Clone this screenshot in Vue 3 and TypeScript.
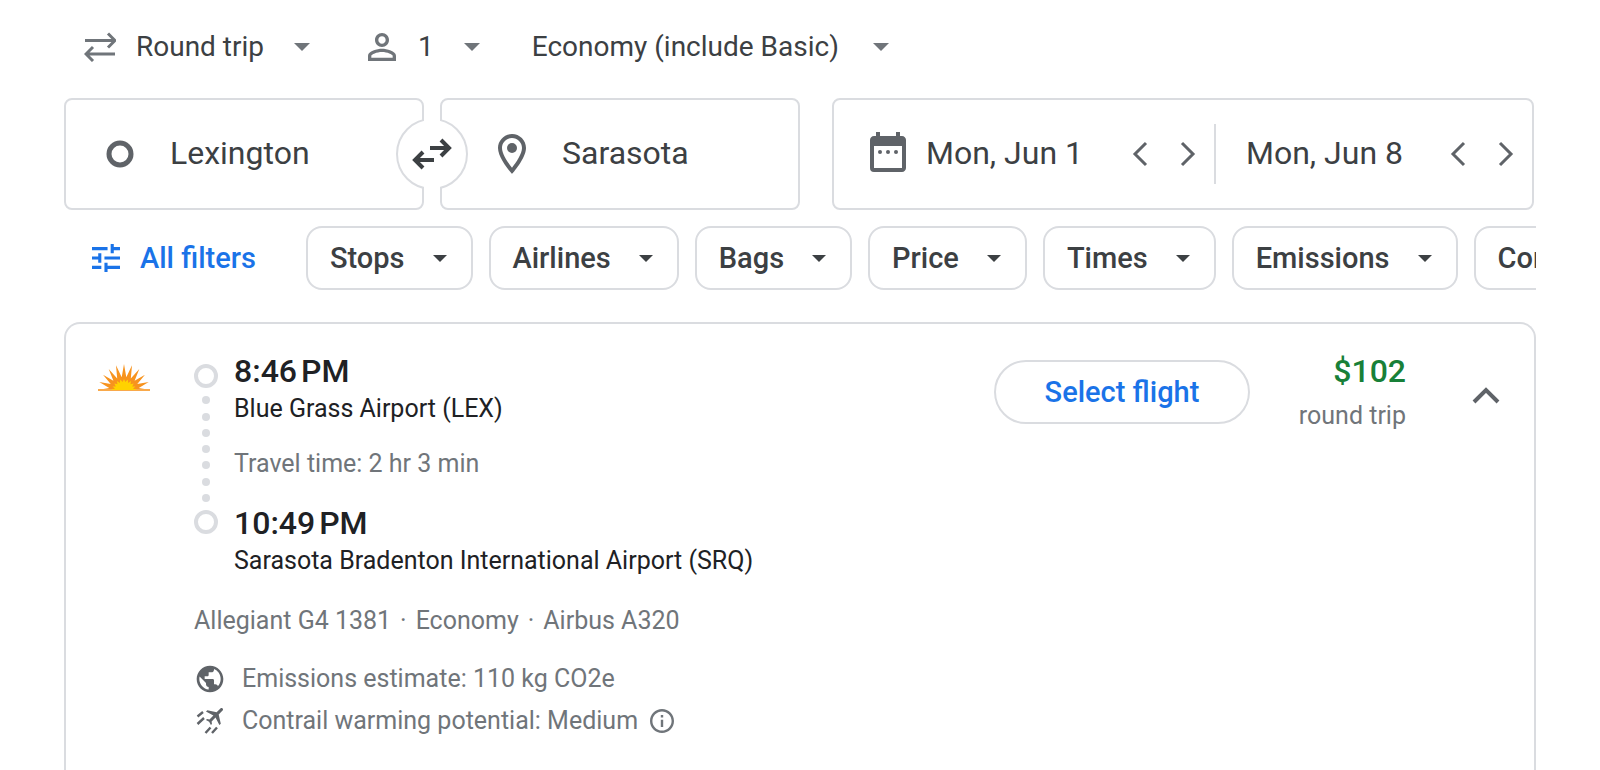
<script setup lang="ts">
import { ref } from 'vue'

const tripType = ref('Round trip')
const cabin = ref('Economy (include Basic)')
const origin = ref('Lexington')
const destination = ref('Sarasota')

const dates = ref([
  { id: 'departure', label: 'Departure', value: 'Mon, Jun 1' },
  { id: 'return', label: 'Return', value: 'Mon, Jun 8' },
])

const filters = ['Stops', 'Airlines', 'Bags', 'Price', 'Times', 'Emissions', 'Connecting airports']

function swapPlaces(): void {
  const previous = origin.value
  origin.value = destination.value
  destination.value = previous
}

// Rays of the half-sun logo, alternating between tip and valley over 180 degrees.
function sunRays(count: number, outerX: number, outerY: number, inner: number): string {
  const points: string[] = []
  for (let i = 0; i <= count * 2; i++) {
    const angle = Math.PI - (Math.PI * i) / (count * 2)
    const tip = i % 2 === 0
    const x = 26 + Math.cos(angle) * (tip ? outerX : inner * 1.15)
    const y = 26 - Math.sin(angle) * (tip ? outerY : inner)
    points.push(`${x.toFixed(1)},${y.toFixed(1)}`)
  }
  return points.join(' ')
}

const outerSun = sunRays(10, 26, 26, 13)
const innerSun = sunRays(10, 12, 11, 8)
</script>

<template>
  <main class="page">
    <div class="options">
      <label class="option trip">
        <svg class="swap-thin" viewBox="0 0 32 30" aria-hidden="true">
          <path d="M1 8.500H30M24 1.500l7 7-7 7M31 22H2M9 15l-7 7 7 7" />
        </svg>
        <select v-model="tripType" aria-label="Trip type">
          <option>Round trip</option>
          <option>One way</option>
          <option>Multi-city</option>
        </select>
        <svg class="caret" viewBox="0 0 16 8" aria-hidden="true"><path d="M0 0h16L8 8z" /></svg>
      </label>
      <button class="option people" type="button" aria-label="1 passenger">
        <svg class="person" viewBox="4 4 16 16" aria-hidden="true">
          <path d="M12 5.900c1.160 0 2.100.940 2.100 2.100s-.940 2.100-2.100 2.100S9.900 9.160 9.900 8s.940-2.100 2.100-2.100m0 9c2.970 0 6.100 1.460 6.100 2.100v1.100H5.900V17c0-.640 3.130-2.100 6.100-2.100M12 4C9.790 4 8 5.790 8 8s1.790 4 4 4 4-1.790 4-4-1.790-4-4-4zm0 9c-2.670 0-8 1.340-8 4v3h16v-3c0-2.660-5.330-4-8-4z" />
        </svg>
        <span>1</span>
        <svg class="caret" viewBox="0 0 16 8" aria-hidden="true"><path d="M0 0h16L8 8z" /></svg>
      </button>
      <label class="option cabin">
        <select v-model="cabin" aria-label="Cabin class">
          <option>Economy (include Basic)</option>
          <option>Business</option>
        </select>
        <svg class="caret" viewBox="0 0 16 8" aria-hidden="true"><path d="M0 0h16L8 8z" /></svg>
      </label>
    </div>

    <div class="search">
      <div class="places">
        <label class="field">
          <svg class="field-icon" viewBox="0 0 48 48" aria-hidden="true">
            <circle cx="24" cy="24" r="11" fill="none" stroke="currentColor" stroke-width="5" />
          </svg>
          <input v-model="origin" type="text" aria-label="Where from?" />
        </label>
        <label class="field">
          <svg class="field-icon" viewBox="0 0 24 24" aria-hidden="true">
            <path d="M12 2C8.140 2 5 5.140 5 9c0 5.250 7 13 7 13s7-7.750 7-13c0-3.860-3.140-7-7-7zM7 9c0-2.760 2.240-5 5-5s5 2.240 5 5c0 2.880-2.880 7.190-5 9.880C9.920 16.210 7 11.850 7 9z" />
            <circle cx="12" cy="9" r="2.500" />
          </svg>
          <input v-model="destination" type="text" aria-label="Where to?" />
        </label>
        <button class="swap" type="button" aria-label="Swap origin and destination" @click="swapPlaces">
          <svg viewBox="0 0 40 32" aria-hidden="true">
            <path d="M18 10h19M29 2l8 8-8 8M22 22H3M11 14l-8 8 8 8" />
          </svg>
        </button>
      </div>
      <div class="dates">
        <div v-for="(date, i) in dates" :key="date.id" class="date">
          <svg v-if="i === 0" class="calendar" viewBox="0 0 24 24" aria-hidden="true">
            <path d="M19 4h-1V2h-2v2H8V2H6v2H5c-1.110 0-2 .900-2 2v14a2 2 0 0 0 2 2h14c1.100 0 2-.900 2-2V6c0-1.100-.900-2-2-2zm0 16H5V9h14v11z" />
            <circle cx="8" cy="12" r="1" /><circle cx="12" cy="12" r="1" /><circle cx="16" cy="12" r="1" />
          </svg>
          <input v-model="date.value" type="text" :aria-label="date.label" />
          <button class="step" type="button" :aria-label="`${date.label}: previous day`">
            <svg viewBox="0 0 16 26" aria-hidden="true"><path d="M14 2L3 13l11 11" /></svg>
          </button>
          <button class="step" type="button" :aria-label="`${date.label}: next day`">
            <svg viewBox="0 0 16 26" aria-hidden="true"><path d="M2 2l11 11L2 24" /></svg>
          </button>
        </div>
      </div>
    </div>

    <div class="filters">
      <button class="all-filters" type="button">
        <svg viewBox="3 3 18 18" aria-hidden="true">
          <path d="M3 17v2h6v-2H3zM3 5v2h10V5H3zm10 16v-2h8v-2h-8v-2h-2v6h2zM7 9v2H3v2h4v2h2V9H7zm14 4v-2H11v2h10zm-6-4h2V7h4V5h-4V3h-2v6z" />
        </svg>
        All filters
      </button>
      <button v-for="filter in filters" :key="filter" class="chip" type="button">
        {{ filter }}
        <svg viewBox="0 0 14 7" aria-hidden="true"><path d="M0 0h14L7 7z" /></svg>
      </button>
    </div>

    <article class="card">
      <svg class="logo" viewBox="0 0 52 27" role="img" aria-label="Allegiant">
        <polygon :points="outerSun" fill="#f7931e" />
        <polygon :points="innerSun" fill="#ffd200" />
        <path d="M0 25h52v2H0z" fill="#f9a94b" />
        <path d="M14 25h24v1H14z" fill="#ffd200" />
      </svg>

      <div class="details">
        <div class="route">
          <div class="track" aria-hidden="true">
            <i class="stop"></i>
            <i v-for="n in 7" :key="n" class="dot"></i>
            <i class="stop"></i>
          </div>
          <div class="legs">
            <p class="time">8:46&#8239;PM</p>
            <p class="airport">Blue Grass Airport (LEX)</p>
            <p class="duration">Travel time: 2 hr 3 min</p>
            <p class="time">10:49&#8239;PM</p>
            <p class="airport">Sarasota Bradenton International Airport (SRQ)</p>
          </div>
        </div>
        <p class="aircraft">
          <span>Allegiant G4 1381</span><span>·</span><span>Economy</span><span>·</span><span>Airbus A320</span>
        </p>
        <div class="impact">
          <svg class="impact-icon" viewBox="0 0 24 24" aria-hidden="true">
            <path d="M12 2C6.480 2 2 6.480 2 12s4.480 10 10 10 10-4.480 10-10S17.520 2 12 2zm-1 17.930c-3.950-.490-7-3.850-7-7.930 0-.620.080-1.210.210-1.790L9 15v1c0 1.100.900 2 2 2v1.930zm6.900-2.540c-.260-.810-1-1.390-1.900-1.390h-1v-3c0-.550-.450-1-1-1H8v-2h2c.550 0 1-.450 1-1V7h2c1.100 0 2-.900 2-2v-.410c2.930 1.190 5 4.060 5 7.410 0 2.080-.800 3.970-2.100 5.390z" />
          </svg>
          <span>Emissions estimate: 110 kg CO2e</span>
        </div>
        <div class="impact">
          <svg class="impact-icon" viewBox="0 0 32 32" aria-hidden="true">
            <path
              transform="translate(21.5 10.5) rotate(45) translate(-11.5 -12)"
              d="M21 16v-2l-8-5V3.500c0-.830-.670-1.500-1.500-1.500S10 2.670 10 3.500V9l-8 5v2l8-2.500V19l-2 1.500V22l3.500-1 3.500 1v-1.500L13 19v-5.500l8 2.500z"
            />
            <path d="M3.500 11.500l5.500-4.500M3.500 19l6.500-6M11.500 28l5-5.500M18 28l5-5.500" fill="none" stroke="currentColor" stroke-width="2.400" />
          </svg>
          <span>Contrail warming potential: Medium</span>
          <button class="info" type="button" aria-label="About contrail warming">
            <svg viewBox="2 2 20 20" aria-hidden="true">
              <path d="M11 17h2v-6h-2v6zm1-15C6.480 2 2 6.480 2 12s4.480 10 10 10 10-4.480 10-10S17.520 2 12 2zm0 18c-4.410 0-8-3.590-8-8s3.590-8 8-8 8 3.590 8 8-3.590 8-8 8zM11 9h2V7h-2v2z" />
            </svg>
          </button>
        </div>
      </div>

      <button class="select-flight" type="button">Select flight</button>
      <div class="price">
        <strong>$102</strong>
        <span>round trip</span>
      </div>
      <button class="collapse" type="button" aria-label="Hide flight details" aria-expanded="true">
        <svg viewBox="0 0 28 18" aria-hidden="true"><path d="M2 15L14 3l12 12" /></svg>
      </button>
    </article>
  </main>
</template>

<style>
body {
  margin: 0;
  background: #fff;
}
</style>

<style scoped>
.page {
  display: flex;
  flex-direction: column;
  box-sizing: border-box;
  min-height: 100vh;
  padding: 0 64px;
  font-family: Roboto, 'Liberation Sans', sans-serif;
  font-size: 28px;
  line-height: 36px;
  color: #3c4043;
}

.page * {
  box-sizing: border-box;
}

button,
input,
select {
  margin: 0;
  padding: 0;
  border: 0;
  background: none;
  color: inherit;
  font: inherit;
}

button,
select {
  cursor: pointer;
}

svg {
  display: block;
  flex: none;
  fill: currentColor;
}

p {
  margin: 0;
}

.options {
  display: flex;
  align-items: center;
  height: 92px;
  padding: 2px 0 0 20px;
}

.option {
  display: flex;
  align-items: center;
}

.option select {
  appearance: none;
  field-sizing: content;
}

.option svg {
  color: #70757a;
}

.caret {
  width: 16px;
  height: 8px;
  margin-left: 30px;
}

.swap-thin {
  width: 32px;
  height: 30px;
  margin-right: 20px;
  fill: none;
  stroke: currentColor;
  stroke-width: 3;
}

.people {
  margin: 0 52px 0 58px;
}

.person {
  width: 28px;
  height: 28px;
  margin-right: 22px;
}

.cabin .caret {
  margin-left: 34px;
}

.search {
  display: grid;
  grid-template-columns: minmax(0, 736fr) minmax(0, 702fr);
  gap: 32px;
  margin-top: 6px;
  padding-right: 2px;
  font-size: 32px;
}

.search input {
  flex: 1;
  min-width: 0;
  padding-bottom: 2px;
}

.places {
  position: relative;
  display: grid;
  grid-template-columns: repeat(2, minmax(0, 1fr));
  gap: 16px;
}

.field {
  display: flex;
  align-items: center;
  height: 112px;
  padding: 0 30px;
  border: 2px solid #dadce0;
  border-radius: 8px;
}

.field + .field {
  padding-left: 46px;
}

.field-icon {
  width: 48px;
  height: 48px;
  margin-right: 26px;
  color: #5f6368;
}

.swap {
  position: absolute;
  top: 50%;
  left: 50%;
  display: grid;
  place-items: center;
  width: 72px;
  height: 72px;
  border: 2px solid #dadce0;
  border-radius: 50%;
  background: #fff;
  transform: translate(-50%, -50%);
}

/* Opens the ring where it crosses the gap between the two fields. */
.swap::before {
  content: '';
  position: absolute;
  inset: -2px 26px;
  background: #fff;
}

.swap svg {
  position: relative;
  width: 40px;
  height: 32px;
  fill: none;
  stroke: currentColor;
  stroke-width: 4;
}

.dates {
  display: grid;
  grid-template-columns: minmax(0, 380fr) minmax(0, 318fr);
  align-items: center;
  border: 2px solid #dadce0;
  border-radius: 8px;
}

.date {
  display: flex;
  align-items: center;
  height: 60px;
  padding: 0 2px 0 30px;
}

.date + .date {
  border-left: 2px solid #dadce0;
}

.calendar {
  width: 48px;
  height: 48px;
  margin: 0 14px 4px 0;
  color: #5f6368;
}

.step {
  display: grid;
  flex: none;
  place-items: center;
  width: 48px;
  height: 48px;
  color: #5f6368;
}

.step svg {
  width: 16px;
  height: 26px;
  fill: none;
  stroke: currentColor;
  stroke-width: 3;
}

.filters {
  display: flex;
  gap: 16px;
  margin-top: 16px;
  overflow: hidden;
  font-size: 29px;
  font-weight: 500;
}

.all-filters {
  display: flex;
  flex: none;
  align-items: center;
  gap: 20px;
  margin-right: 34px;
  padding-left: 28px;
  color: #1a73e8;
}

.all-filters svg {
  width: 28px;
  height: 28px;
}

.chip {
  display: flex;
  flex: none;
  align-items: center;
  gap: 28px;
  height: 64px;
  padding: 0 24px 0 22px;
  border: 2px solid #dadce0;
  border-radius: 16px;
}

.chip svg {
  width: 14px;
  height: 7px;
}

.card {
  display: flex;
  flex: 1;
  align-items: flex-start;
  margin-top: 32px;
  padding: 28px 32px 0;
  border: 2px solid #dadce0;
  border-bottom: 0;
  border-radius: 16px 16px 0 0;
  font-size: 25px;
  line-height: 32px;
}

.logo {
  width: 52px;
  height: 27px;
  margin: 12px 44px 0 0;
}

.details {
  flex: 1;
  min-width: 0;
  color: #70757a;
}

.route {
  display: flex;
  gap: 16px;
}

.track {
  display: flex;
  flex-direction: column;
  align-items: center;
  justify-content: space-between;
  height: 170px;
  margin-top: 12px;
}

.stop {
  width: 24px;
  height: 24px;
  border: 4px solid #dadce0;
  border-radius: 50%;
}

.dot {
  width: 8px;
  height: 8px;
  border-radius: 50%;
  background: #dadce0;
}

.time {
  font-size: 32px;
  font-weight: 500;
  line-height: 38px;
  color: #202124;
}

.airport {
  line-height: 38px;
  color: #202124;
}

.duration {
  margin: 20px 0 24px;
}

.aircraft {
  display: flex;
  gap: 9px;
  margin: 25px 0 26px;
}

.impact {
  display: flex;
  align-items: center;
  margin-bottom: 10px;
}

.impact-icon {
  width: 32px;
  height: 32px;
  margin-right: 16px;
  color: #5f6368;
}

.info {
  margin-left: 12px;
}

.info svg {
  width: 24px;
  height: 24px;
}

.select-flight {
  width: 256px;
  height: 64px;
  margin-top: 8px;
  border: 2px solid #dadce0;
  border-radius: 32px;
  color: #1a73e8;
  font-size: 29px;
  font-weight: 500;
}

.price {
  display: flex;
  flex-direction: column;
  align-items: flex-end;
  width: 156px;
  color: #70757a;
}

.price strong {
  font-size: 32px;
  font-weight: 500;
  line-height: 38px;
  color: #188038;
}

.price span {
  margin-top: 10px;
}

.collapse {
  display: grid;
  place-items: center;
  width: 28px;
  height: 28px;
  margin: 30px 2px 0 66px;
  color: #5f6368;
}

.collapse svg {
  width: 28px;
  height: 18px;
  fill: none;
  stroke: currentColor;
  stroke-width: 4;
}
</style>
